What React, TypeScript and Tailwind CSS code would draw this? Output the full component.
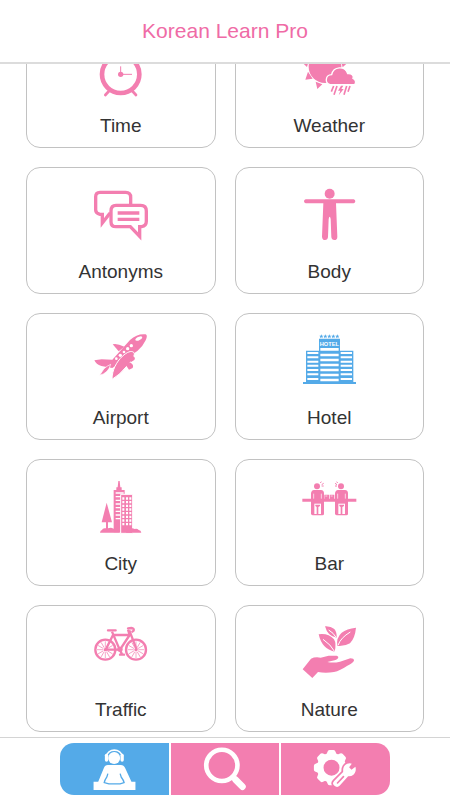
import type { ReactNode } from "react";

interface Category {
  name: string;
  // part of the drawing that is shown in the card
  viewBox: string;
  color: string;
  icon: ReactNode;
}

const PINK = "text-[#f37eb0]";
const BLUE = "text-[#54aae8]";

// alarm clock
const timeIcon = (
  <>
    <circle cx="122" cy="58" r="56" fill="none" stroke="currentColor" strokeWidth="14" />
    <circle cx="122" cy="58" r="8" />
    <path d="M122 58V34" stroke="currentColor" strokeWidth="3" />
    <path d="M122 58H156" stroke="currentColor" strokeWidth="3" />
    <path
      d="M87 108 76 120M157 108 168 120"
      stroke="currentColor"
      strokeWidth="8"
      strokeLinecap="round"
    />
  </>
);

// sun behind a rain cloud
const weatherIcon = (
  <>
    <circle cx="105" cy="35" r="49" />
    <path d="M36 22h19l-4 14zM154 22h20l-16 15zM46 74l8-24 14 21zM77 80l20 8-15 14z" />
    <path
      d="M120 89c-16-4-15-29 5-30 5-25 40-28 48-3 14-1 19 7 16 14 8 3 10 13 5 19z"
      stroke="white"
      strokeWidth="4"
    />
    <path
      d="m131 93-7 17M141 93l-9 26M170 93l-8 26M180 93l-6 17"
      stroke="currentColor"
      strokeWidth="5"
      fill="none"
    />
    <path d="m153 92-9 15h7l-5 14 15-19h-7l6-10z" />
  </>
);

// two speech bubbles
const antonymsIcon = (
  <>
    <path
      d="M60 37h77q15 0 15 15v38q0 12-15 12H88L67 129V103H60Q47 100 47 90V50q0-13 13-13z"
      fill="none"
      stroke="currentColor"
      strokeWidth="10"
    />
    <path
      d="M108 76h74q17 0 17 17v31q0 14-14 16h-6v29l-28-29h-43q-15 0-15-15V93q0-17 15-17z"
      fill="white"
      stroke="currentColor"
      strokeWidth="10"
    />
    <path d="M113 99h65M113 118h65" stroke="currentColor" strokeWidth="10" />
  </>
);

// person with stretched arms
const bodyIcon = (
  <>
    <circle cx="119" cy="41" r="15" />
    <path d="M47 58h144q5 1 5 6t-5 6h-53l4 100q0 10-9 10-8 0-9-9l-2-54q-3-13-6 0l-2 54q-1 9-9 9t-9-10l4-100H47q-5-1-5-6t5-6z" />
  </>
);

// plane taking off
const airportIcon = (
  <>
    <path d="M43 106l22-3 32 1 53-59q22-20 47-17 7 3 0 18-8 18-25 32L97 129l-33-6q-16-5-21-17z" />
    <path d="M98 58q12-4 35 7l-17 14z" />
    <path d="M59 151l13-20q9-8 20-13-6 26-33 33z" stroke="white" strokeWidth="2" />
    <path
      d="M96 163c0-27 13-52 31-69 14-13 27-18 34-12 7 7-6 26-23 44q-19 24-42 37z"
      stroke="white"
      strokeWidth="3"
    />
    <path d="M148 101l10-8q10 5 5 12l-11 7zM137 119l12-7q14 7 9 17l-11 5z" />
    <g fill="white">
      <circle cx="109" cy="101" r="4" />
      <circle cx="121" cy="91" r="5" />
      <circle cx="132" cy="81" r="4" />
      <circle cx="143" cy="71" r="5" />
      <circle cx="154" cy="62" r="5" />
      <path d="M166 43q4-7 17-9 7 2 1 8l-9 5q-10 2-9-4z" />
    </g>
  </>
);

// hotel building, its windows are white bars
const hotelIcon = (
  <>
    <path d="M48 77h39V41h63v36h40v94h8v6H39v-6h9z" />
    {[94, 106, 118, 130, 142].map((x) => (
      <path
        key={x}
        transform={`translate(${x} 34)`}
        d="M0-6 2-2 6-2 3 1 4 6 0 3-4 6-3 1-6-2-2-2z"
      />
    ))}
    <text
      x="118"
      y="62"
      fill="white"
      textAnchor="middle"
      className="font-['Liberation_Sans',sans-serif] text-[17px] font-bold"
    >
      HOTEL
    </text>
    <path
      d="M91 73h55M91 90h55M91 105h55M91 120h55M91 135h55M91 150h55M91 165h55"
      stroke="white"
      strokeWidth="8"
    />
    <path
      d="M52 84h33M52 97h33M52 110h33M52 122h33M52 135h33M52 148h33M52 162h33M152 84h34M152 97h34M152 110h34M152 122h34M152 135h34M152 148h34M152 162h34"
      stroke="white"
      strokeWidth="6"
    />
  </>
);

// skyscrapers, a tree and bushes
const cityIcon = (
  <>
    <path d="M101 60h8v-8h4l2-19h4l2 19h4v8h9v127h-33z" />
    <path
      d="M107 69h24M107 80h18M107 91h15M107 102h15M107 113h15M107 124h15M107 135h15M107 146h15"
      stroke="white"
      strokeWidth="4"
    />
    <path d="M122 73h36v117h-36z" stroke="white" strokeWidth="3" />
    <path
      d="M130 82v88M141 82v88M151 82v88"
      stroke="white"
      strokeWidth="6"
      strokeDasharray="7 4"
    />
    <path d="M80 98 65 157h13v18q-10-2-12 5-5 1-6 8h60q-3-8-8-8-4-7-12-4-6-5-16-1v-18h12zM138 188q2-9 9-8 7-9 17-3 7-3 12 3 7 0 8 8z" />
  </>
);

// drinker with a stool, the second one stands 72 to the right
const drinker = (
  <>
    <circle cx="81" cy="49" r="9" />
    <path d="M72 60h21q9 1 9 10v61q0 5-5 5H68q-5 0-5-6V70q1-9 9-10z" />
    <path d="M71 71v15M94 71v15" stroke="white" strokeWidth="2" />
    <path d="M73 132V101h20v31z" fill="white" />
    <path d="M76 104h14v4l-5 3v21h-5v-21l-4-3z" />
  </>
);

const barIcon = (
  <>
    <path d="M37 86h162v9H37z" />
    {drinker}
    <g transform="translate(72 0)">{drinker}</g>
    <path d="M103 74h14v13h-14zM119 74h14v13h-14z" />
    <path d="M106 78h6M122 78h6" stroke="white" strokeWidth="2" />
    <path
      d="m91 39 3-4M95 44l6-4M95 48h6M143 39l-3-4M141 44l-6-4M141 48h-6"
      stroke="currentColor"
      strokeWidth="3"
    />
  </>
);

const spokes = [0, 30, 60, 90, 120, 150];

const wheel = (
  <>
    <circle r="30" fill="none" stroke="currentColor" strokeWidth="7" />
    {spokes.map((deg) => (
      <path
        key={deg}
        transform={`rotate(${deg})`}
        d="M-25 0H-7M7 0H25"
        stroke="currentColor"
        strokeWidth="2"
      />
    ))}
    <circle r="5" />
  </>
);

// bicycle
const trafficIcon = (
  <>
    <g transform="translate(76 104)">{wheel}</g>
    <g transform="translate(168 104)">{wheel}</g>
    <path
      d="M77 104 99 60H149L120 104H78M96 50 119 104M148 46 170 104M149 60l-5-16"
      fill="none"
      stroke="currentColor"
      strokeWidth="7"
      strokeLinejoin="round"
    />
    <path
      d="M144 40l10-1q9 1 7 8l-4 3M84 46h23M120 105l6 13M120 119h12"
      fill="none"
      stroke="currentColor"
      strokeWidth="7"
      strokeLinecap="round"
    />
    <circle cx="120" cy="103" r="8" />
  </>
);

// hand holding leaves
const natureIcon = (
  <>
    <path d="M38 163l25-32q12-6 29-3l24-6h24q7 2 4 8-5 6-20 8l-12 3q18 4 38-1l31-10q11 0 11 7-4 7-20 15-22 15-40 19-25 4-48 0l-17 18z" />
    <path d="M86 58q29-4 46 15 8 13 2 37-38-7-48-52zM105 34q17-1 28 8 8 9 7 26-27-3-35-34zM198 38q-3 31-18 47-17 10-38 8-4-25 13-40 15-12 43-15z" />
    <path
      d="M99 73q24 16 35 37M116 45q15 9 22 22M181 51q-29 17-37 40"
      fill="none"
      stroke="white"
      strokeWidth="3"
    />
  </>
);

const categories: Category[] = [
  { name: "Time", viewBox: "3 -66 240 210", color: PINK, icon: timeIcon },
  { name: "Weather", viewBox: "-3 -66 240 210", color: PINK, icon: weatherIcon },
  { name: "Antonyms", viewBox: "3 -3 240 210", color: PINK, icon: antonymsIcon },
  { name: "Body", viewBox: "-3 -3 240 210", color: PINK, icon: bodyIcon },
  { name: "Airport", viewBox: "3 0 240 210", color: PINK, icon: airportIcon },
  { name: "Hotel", viewBox: "-3 0 240 210", color: BLUE, icon: hotelIcon },
  { name: "City", viewBox: "3 3 240 210", color: PINK, icon: cityIcon },
  { name: "Bar", viewBox: "-3 3 240 210", color: PINK, icon: barIcon },
  { name: "Traffic", viewBox: "3 6 240 210", color: PINK, icon: trafficIcon },
  { name: "Nature", viewBox: "-3 6 240 210", color: PINK, icon: natureIcon },
];

function CategoryCard({ category }: { category: Category }) {
  return (
    <button
      type="button"
      className="flex flex-col items-center rounded-[14px] border border-[#c2c2c2] bg-white pt-[11px] pb-[9px]"
    >
      <svg
        viewBox={category.viewBox}
        className={`h-[70px] w-20 ${category.color}`}
        fill="currentColor"
        aria-hidden="true"
      >
        {category.icon}
      </svg>
      <span className="mt-[11px] text-[19px] leading-6 text-[#333]">{category.name}</span>
    </button>
  );
}

const gearTeeth = [0, 45, 90, 135, 180, 225, 270, 315];

// Bottom navigation
function BottomBar() {
  return (
    <nav className="flex h-[63px] shrink-0 gap-0.5 border-t border-[#d4d4d4] bg-white px-15 pt-[5px] pb-[5px]">
      <button
        type="button"
        aria-label="Learn"
        className="flex flex-1 items-center justify-center rounded-l-[14px] bg-[#54aae8]"
      >
        <svg viewBox="30 39 327 156" className="h-[52px] w-full text-white" fill="currentColor">
          <path d="M169 80a25 25 0 0 1 49 0" fill="none" stroke="currentColor" strokeWidth="5" />
          <circle cx="193" cy="84" r="18" />
          <rect x="165" y="71" width="10" height="24" rx="5" />
          <rect x="212" y="71" width="10" height="24" rx="5" />
          <path d="M174 105h39q9 0 13 9l19 41h12v25H131v-25h14l17-41q3-9 12-9z" />
          <path
            d="m174 131-3 10q-6 9-8 17l14 4h34l12-4q-2-8-9-17l-3-10"
            fill="none"
            stroke="#54aae8"
            strokeWidth="4"
          />
        </svg>
      </button>
      <button
        type="button"
        aria-label="Search"
        className="flex flex-1 items-center justify-center bg-[#f37eb0]"
      >
        <svg viewBox="363 39 327 156" className="h-[52px] w-full text-white" fill="none">
          <circle cx="516" cy="106" r="47" stroke="currentColor" strokeWidth="14" />
          <path d="m549 141 8 8" stroke="currentColor" strokeWidth="14" />
          <path d="m557 149 21 21" stroke="currentColor" strokeWidth="20" strokeLinecap="round" />
        </svg>
      </button>
      <button
        type="button"
        aria-label="Settings"
        className="flex flex-1 items-center justify-center rounded-r-[14px] bg-[#f37eb0]"
      >
        <svg viewBox="694 39 327 156" className="h-[52px] w-full text-white" fill="currentColor">
          <g transform="translate(846 113)">
            <circle r="34" fill="none" stroke="currentColor" strokeWidth="20" />
            {gearTeeth.map((deg) => (
              <path
                key={deg}
                transform={`rotate(${deg})`}
                d="M-16-38l4-10q1-5 6-5H6q5 0 6 5l4 10z"
              />
            ))}
          </g>
          {/* wrench over the gear */}
          <path
            d="M854 153l27-27q-2-19 12-25 9-3 14 0l-8 11 7 7 12-9q4 15-6 24-7 6-16 5l-25 28q-8 8-17 0-7-7 0-14z"
            stroke="#f37eb0"
            strokeWidth="10"
            strokeLinejoin="round"
          />
          <path d="M854 153l27-27q-2-19 12-25 9-3 14 0l-8 11 7 7 12-9q4 15-6 24-7 6-16 5l-25 28q-8 8-17 0-7-7 0-14z" />
          <path d="m864 159 18-19" stroke="#f37eb0" strokeWidth="5" strokeLinecap="round" />
        </svg>
      </button>
    </nav>
  );
}

export default function App() {
  return (
    <div className="flex h-screen flex-col bg-white font-['Liberation_Sans',Arial,sans-serif]">
      <header className="flex h-16 shrink-0 items-center justify-center border-b-2 border-[#dcdcdc]">
        <h1 className="text-[21px] leading-6 text-[#ef6ba6]">Korean Learn Pro</h1>
      </header>

      {/* Category list, scrolled to its end */}
      <main className="flex flex-1 flex-col justify-end overflow-hidden px-[26px] pb-[5px]">
        <div className="grid grid-cols-2 gap-[19px]">
          {categories.map((category) => (
            <CategoryCard key={category.name} category={category} />
          ))}
        </div>
      </main>

      <BottomBar />
    </div>
  );
}
